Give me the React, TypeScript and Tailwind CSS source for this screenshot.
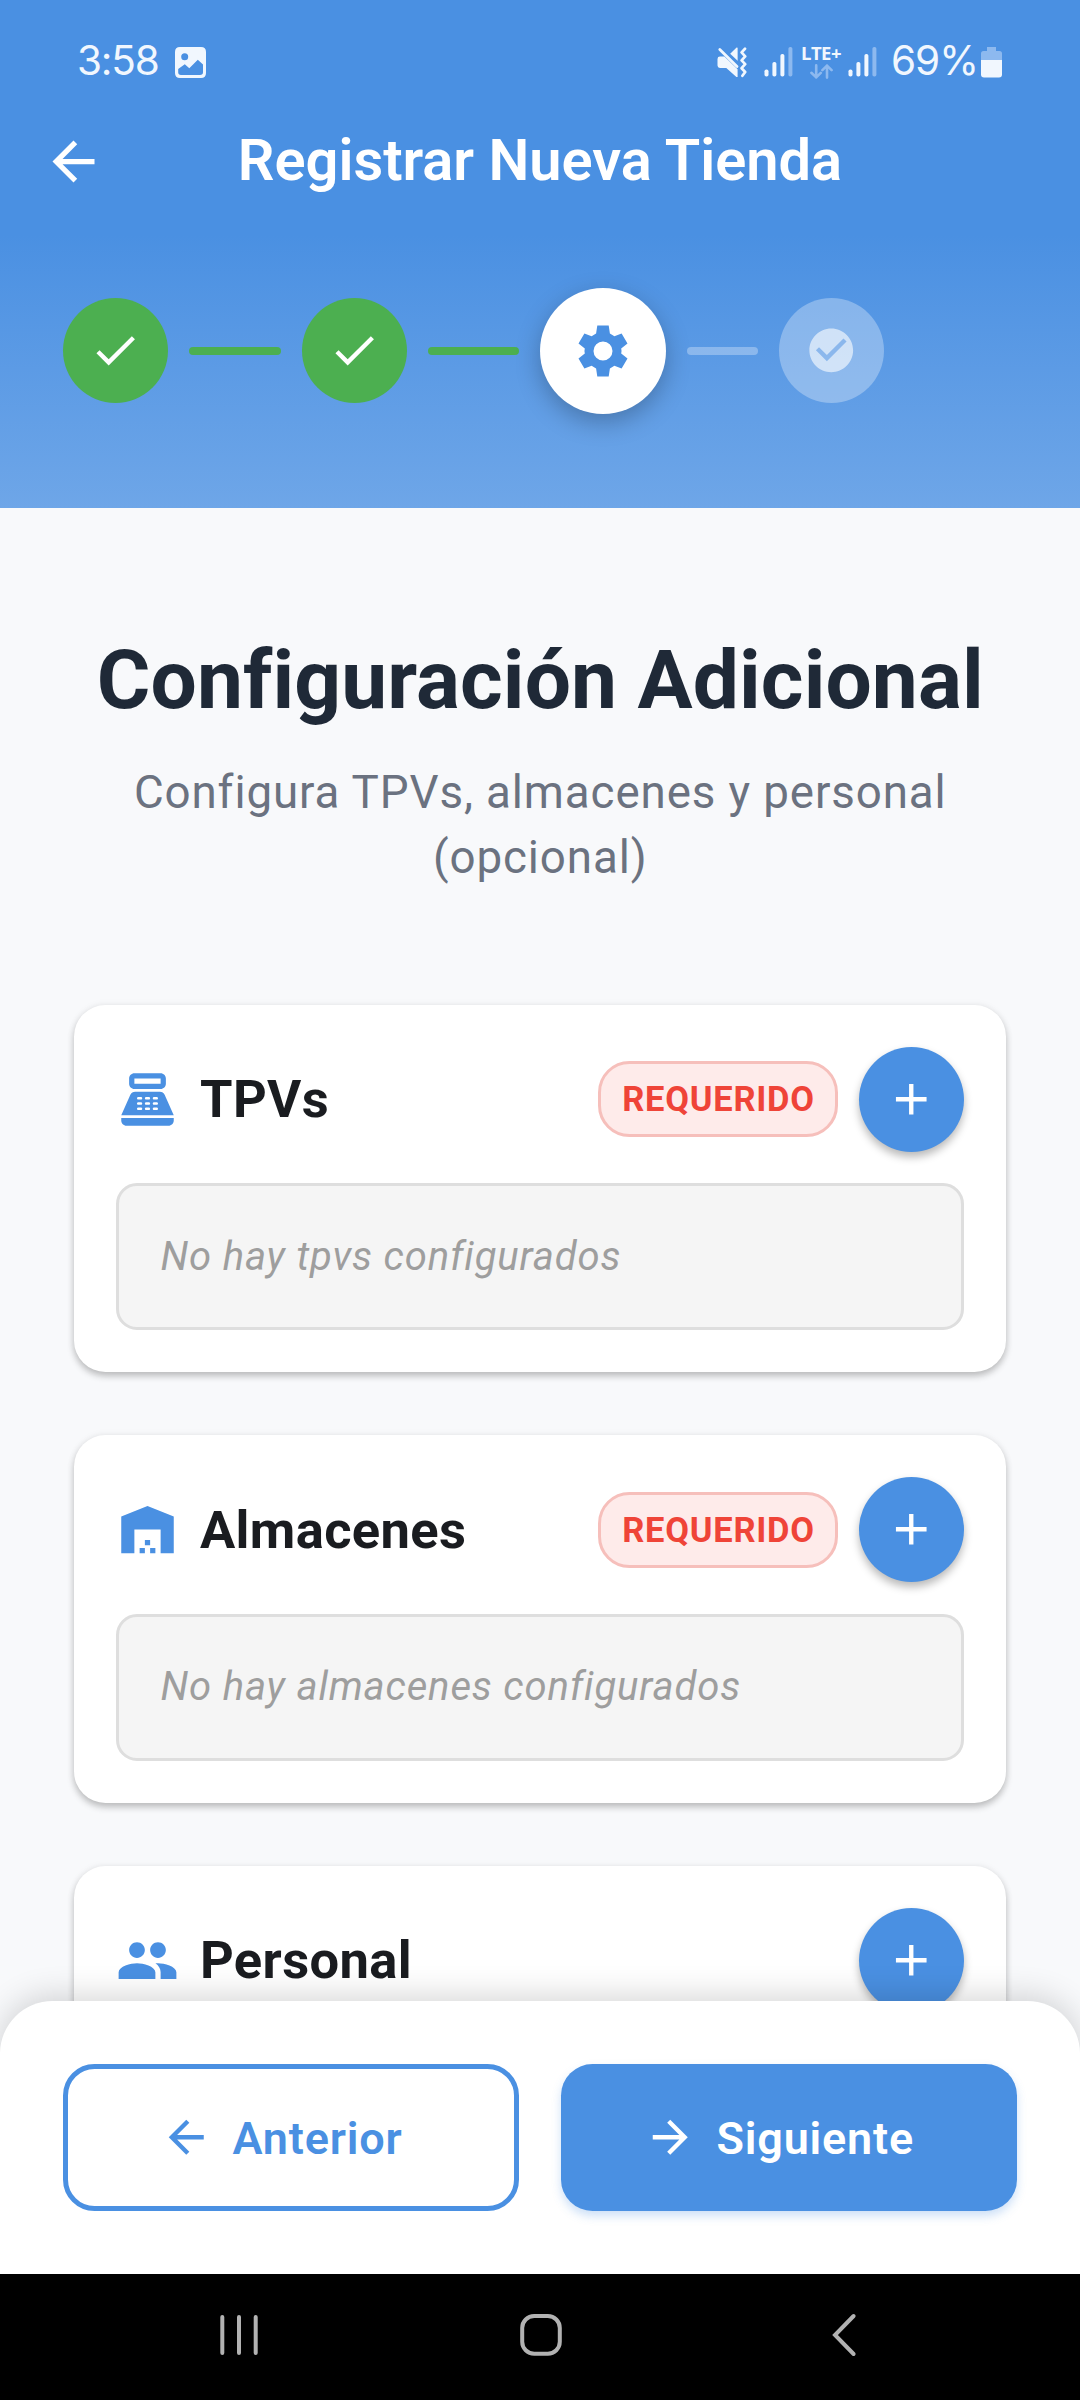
import type { ReactNode } from "react";
import { MdArrowBack, MdArrowForward, MdAdd, MdCheck, MdCheckCircle, MdPeople, MdPointOfSale, MdWarehouse } from "react-icons/md";

function SignalBars() {
  return (
    <svg className="h-[31px] w-[29px]" viewBox="0 0 29 31" fill="#F1F7FE">
      <rect x="0.5" y="23.5" width="4" height="7" rx="1.8" />
      <rect x="8.4" y="16" width="4" height="14.5" rx="1.8" />
      <rect x="16.4" y="8" width="4" height="22.5" rx="1.8" />
      <rect x="24.4" y="1" width="4" height="29.5" rx="1.8" fill="#8DB9EF" />
    </svg>
  );
}

function GearIcon() {
  return (
    <svg className="size-[60px]" viewBox="-30 -30 60 60" fill="#4A90E2">
      <path
        fillRule="evenodd"
        d="M-5.7 -25.5H5.7L6.9 -17.4L11.4 -14.8L18.6 -17.5L24.5 -7.4L18.2 -2.6Q18.9 0 18.2 2.6L24.5 7.4L18.6 17.5L11.4 14.8L6.9 17.4L5.7 25.5H-5.7L-6.9 17.4L-11.4 14.8L-18.6 17.5L-24.5 7.4L-18.2 2.6Q-18.9 0 -18.2 -2.6L-24.5 -7.4L-18.6 -17.5L-11.4 -14.8L-6.9 -17.4ZM0 -9.5A9.5 9.5 0 1 0 0 9.5A9.5 9.5 0 1 0 0 -9.5Z"
      />
    </svg>
  );
}

function StatusBar() {
  return (
    <div className="flex h-[88px] items-start justify-between pl-[77px] pr-[78px] pt-[46px] text-[#F1F7FE]">
      <div className="flex items-start">
        <span className="w-[98px] font-[Inter] text-[40.5px] leading-[30px] font-[380] tracking-[-1.2px]">3:58</span>
        <svg className="mt-px h-[31px] w-[31px]" viewBox="0 0 31 31">
          <path
            fillRule="evenodd"
            fill="#F1F7FE"
            d="M5 0H26Q31 0 31 5V26Q31 31 26 31H5Q0 31 0 26V5Q0 0 5 0ZM9.7 6.3A3.5 3.5 0 1 0 9.7 13.3A3.5 3.5 0 1 0 9.7 6.3ZM3.2 22V25.3Q3.2 28 6 28H25Q28 28 28 25.3V17.5L22.8 12.8L14.3 21.2L9.8 17.3L3.2 22Z"
          />
        </svg>
      </div>
      <div className="flex items-start">
        <svg className="mt-px mr-[16px] h-[31px] w-[31px]" viewBox="0 0 31 31" fill="none">
          <path d="M20.6 0.8V13.8L13.2 6.8L19.6 0.6Z" fill="#F1F7FE" />
          <path d="M0.5 12Q0.5 9.6 3 9.6H7.4L20.6 22.2V30H19.4L9.3 21H3Q0.5 21 0.5 18.6Z" fill="#F1F7FE" />
          <path d="M2.8 2.6L20 19.4" stroke="#F1F7FE" strokeWidth="2.8" strokeLinecap="round" />
          <path d="M28 1.8L24.6 5.4L28.2 9.4L24.6 13.3L28.2 17.2L24.6 21.2L28.2 25L25.4 28.8" stroke="#F1F7FE" strokeWidth="2.7" strokeLinecap="round" strokeLinejoin="round" />
        </svg>
        <SignalBars />
        <div className="ml-[9px] mr-[8px] flex w-[38px] flex-col items-center">
          <span className="-mt-[3px] h-[20px] font-['Open_Sans'] text-[18.5px] leading-[20px] font-bold tracking-[-0.5px]">LTE+</span>
          <svg className="mt-[1px] h-[15px] w-[23px]" viewBox="0 0 23 15" fill="none" stroke="#8DB9EF" strokeWidth="2.6" strokeLinecap="round" strokeLinejoin="round">
            <path d="M6.2 1.4V13.4M1.4 8.8L6.2 13.4L10.8 8.8" />
            <path d="M17 13.6V1.6M12.4 6.2L17 1.6L21.6 6.2" />
          </svg>
        </div>
        <SignalBars />
        <span className="ml-[14px] w-[90px] font-[Inter] text-[40.5px] leading-[30px] font-[380] tracking-[-1px]">69%</span>
        <svg className="mt-px h-[32px] w-[21px]" viewBox="0 0 21 32">
          <path d="M6 0H15V4H18.5Q21 4 21 6.5V13H0V6.5Q0 4 2.5 4H6Z" fill="#8DB9EF" />
          <path d="M0 13H21V27.5Q21 30.5 18 30.5H3Q0 30.5 0 27.5Z" fill="#F1F7FE" />
        </svg>
      </div>
    </div>
  );
}

function Stepper() {
  return (
    <div className="flex h-[273px] items-center gap-[21px] bg-linear-to-b from-[#4A90E2] to-[#6EA6E8] pb-[42px] pl-[63px]">
      <div className="flex size-[105px] items-center justify-center rounded-full bg-[#4CAF50]">
        <MdCheck className="size-[52.5px] text-white" />
      </div>
      <div className="h-[8px] w-[91.5px] rounded-full bg-[#4CAF50]" />
      <div className="flex size-[105px] items-center justify-center rounded-full bg-[#4CAF50]">
        <MdCheck className="size-[52.5px] text-white" />
      </div>
      <div className="h-[8px] w-[91.5px] rounded-full bg-[#4CAF50]" />
      <div className="flex size-[126px] items-center justify-center rounded-full bg-white shadow-[0_8px_24px_rgba(0,0,0,0.25)]">
        <GearIcon />
      </div>
      <div className="h-[8px] w-[70.5px] rounded-full bg-white/30" />
      <div className="flex size-[105px] items-center justify-center rounded-full bg-white/30">
        <MdCheckCircle className="size-[52.5px] text-white/60" />
      </div>
    </div>
  );
}

function SectionCard({ icon, title, required, empty }: { icon: ReactNode; title: string; required?: boolean; empty?: string }) {
  return (
    <section className="h-[367.5px] shrink-0 rounded-[31.5px] bg-white p-[42px] shadow-[0_4px_7px_rgba(0,0,0,0.24),0_0_8px_rgba(0,0,0,0.05)]">
      <div className="flex h-[105px] items-center">
        <span className="text-[63px] text-[#4A90E2]">{icon}</span>
        <h2 className="ml-[21.5px] flex-1 text-[52.5px] leading-[66px] font-bold tracking-[0.35px] text-[#1A1C20]">{title}</h2>
        {required && (
          <span className="mr-[21px] flex h-[76px] w-[240px] items-center justify-center rounded-[31.5px] border-[3px] border-[#F6BFBB] bg-[#FEEBEA] pl-px text-[34.5px] leading-[46px] font-bold tracking-[0.75px] text-[#EF4438]">
            REQUERIDO
          </span>
        )}
        <button className="flex size-[105px] items-center justify-center rounded-full bg-[#4A90E2] shadow-[0_5px_8px_rgba(0,0,0,0.28)]">
          <MdAdd className="size-[52.5px] text-white" />
        </button>
      </div>
      {empty && (
        <div className="mt-[31.5px] flex h-[147px] items-center rounded-[21px] border-[3px] border-[#DEDEDE] bg-[#F5F5F5] pl-[42px]">
          <p className="text-[40px] leading-[56px] tracking-[0.85px] text-[#9E9E9E] italic">{empty}</p>
        </div>
      )}
    </section>
  );
}

function NavigationBar() {
  return (
    <div className="flex h-[126px] items-center bg-black pb-[4px] pl-[219px]">
      <svg className="h-[44px] w-[41px]" viewBox="0 0 41 44" stroke="#B2B2B2" strokeWidth="4" strokeLinecap="round">
        <path d="M3.3 4V40M20 4V40M36.7 4V40" />
      </svg>
      <svg className="ml-[259px] h-[44px] w-[44px]" viewBox="0 0 44 44" fill="none" stroke="#B2B2B2" strokeWidth="4">
        <rect x="3.2" y="3" width="37.6" height="37.8" rx="12" />
      </svg>
      <svg className="ml-[268px] h-[44px] w-[26px]" viewBox="0 0 26 44" fill="none" stroke="#B2B2B2" strokeWidth="4" strokeLinecap="round">
        <path d="M22.6 3L4 22L22.6 41" />
      </svg>
    </div>
  );
}

export default function App() {
  return (
    <div className="flex h-[2400px] w-[1080px] flex-col overflow-hidden bg-[#F8F9FB] font-[Roboto,sans-serif]">
      <header className="bg-[#4A90E2]">
        <StatusBar />
        <div className="flex h-[147px] items-center pr-[105px] pl-[42px]">
          <MdArrowBack className="size-[63px] text-white" />
          <h1 className="flex-1 pb-[4px] text-center text-[57.75px] leading-[74px] font-semibold text-white">Registrar Nueva Tienda</h1>
        </div>
        <Stepper />
      </header>

      <main className="flex min-h-0 flex-1 flex-col overflow-hidden pr-[74px] pl-[73.5px] pt-[122px]">
        <h2 className="pl-px text-center text-[82px] leading-[100px] font-bold tracking-[0.1px] whitespace-nowrap text-[#1F2937]">Configuración Adicional</h2>
        <p className="mt-[30px] pl-px text-center text-[45.7px] leading-[65px] tracking-[0.9px] text-[#6B7280]">
          Configura TPVs, almacenes y personal
          <br />
          (opcional)
        </p>
        <div className="mt-[114.5px] flex flex-col gap-[63px]">
          <SectionCard icon={<MdPointOfSale />} title="TPVs" required empty="No hay tpvs configurados" />
          <SectionCard icon={<MdWarehouse />} title="Almacenes" required empty="No hay almacenes configurados" />
          <SectionCard icon={<MdPeople />} title="Personal" />
        </div>
      </main>

      <footer className="relative z-10 -mt-[53px] flex h-[273px] shrink-0 justify-between rounded-t-[52.5px] bg-white p-[63px] shadow-[0_-5px_32px_rgba(0,0,0,0.16)]">
        <button className="flex h-[147px] w-[456px] items-center rounded-[31.5px] border-[5.25px] border-[#4A90E2] pl-[92px] text-[#4A90E2]">
          <MdArrowBack className="size-[52.5px]" />
          <span className="ml-[20px] pt-[2px] text-[45px] leading-[60px] font-semibold tracking-[0.8px]">Anterior</span>
        </button>
        <button className="flex h-[147px] w-[456px] items-center rounded-[31.5px] bg-[#4A90E2] pl-[83px] text-white shadow-[0_5px_10px_rgba(74,144,226,0.28)]">
          <MdArrowForward className="size-[52.5px]" />
          <span className="ml-[20px] pt-[2px] text-[45px] leading-[60px] font-semibold tracking-[0.8px]">Siguiente</span>
        </button>
      </footer>
      <div className="relative z-10 shrink-0">
        <NavigationBar />
      </div>
    </div>
  );
}
